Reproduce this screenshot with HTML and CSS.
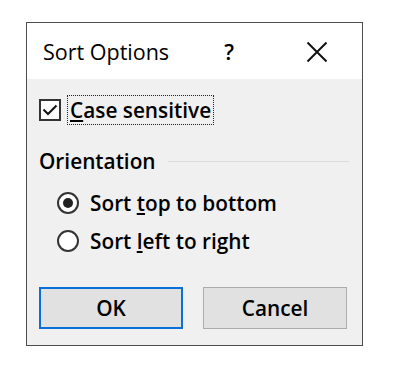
FILE: index.html
```html
<!DOCTYPE html>
<html lang="en">
<head>
    <meta charset="UTF-8">
    <title>Sort Options</title>
    <link rel="stylesheet" href="styles.css">
</head>
<body>
<div class="dialog">
    <div class="title-bar">
        <span class="title">Sort Options</span>
        <span class="help">?</span>
        <span class="close">
            <svg width="22" height="22" viewBox="0 0 22 22">
                <path d="M1.5 1.5 L20.5 20.5 M20.5 1.5 L1.5 20.5" stroke="#111" stroke-width="2" fill="none"/>
            </svg>
        </span>
    </div>
    <div class="content">
        <label class="check-row">
            <span class="checkbox">
                <svg width="18" height="18" viewBox="0 0 18 18">
                    <polyline points="2.5,8.5 7,13 15.5,4.5" stroke="#111" stroke-width="2" fill="none"/>
                </svg>
            </span>
            <span class="focus"><u>C</u>ase sensitive</span>
        </label>

        <div class="group-title">
            <span>Orientation</span>
            <span class="line"></span>
        </div>

        <label class="radio-row first">
            <span class="radio checked"></span>
            <span>Sort <u>t</u>op to bottom</span>
        </label>
        <label class="radio-row">
            <span class="radio"></span>
            <span>Sort <u>l</u>eft to right</span>
        </label>

        <div class="buttons">
            <button class="btn default">OK</button>
            <button class="btn">Cancel</button>
        </div>
    </div>
</div>
</body>
</html>
```

FILE: styles.css
```css
body {
    margin: 0;
    background-color: white;
    font-family: 'Open Sans', sans-serif;
    font-size: 21.5px;
    color: black;
}
.dialog {
    width: 335px;
    margin-left: 26px;
    margin-top: 22px;
    border: 1px solid #4d4d4d;
    background-color: #f0f0f0;
}
.title-bar {
    display: flex;
    align-items: center;
    background-color: white;
    padding: 14px 34px 12px 16px;
    height: 30px;
}
.title {
    line-height: 30px;
}
.help {
    margin-left: auto;
    line-height: 30px;
    font-weight: 600;
}
.close {
    display: flex;
    margin-left: 72px;
}
.content {
    padding: 16px 13px 16px 12px;
    font-size: 20.8px;
    font-weight: 600;
}
.check-row {
    display: flex;
    align-items: center;
    height: 30px;
}
.checkbox {
    width: 18px;
    height: 18px;
    border: 2px solid #333;
    background-color: white;
    display: flex;
}
.focus {
    margin-left: 6px;
    border: 1px dotted #222;
    padding: 0 2px;
    line-height: 28px;
}
.group-title {
    display: flex;
    align-items: center;
    margin-top: 21px;
    line-height: 30px;
}
.group-title .line {
    flex: 1;
    height: 1px;
    background-color: #dcdcdc;
    margin-left: 12px;
}
.radio-row {
    display: flex;
    align-items: center;
    height: 30px;
    margin-top: 8px;
    padding-left: 18px;
}
.radio-row.first {
    margin-top: 12px;
}
.radio {
    width: 18px;
    height: 18px;
    border: 2px solid #333;
    border-radius: 50%;
    background-color: white;
    margin-right: 11px;
    display: flex;
    align-items: center;
    justify-content: center;
}
.radio.checked::after {
    content: "";
    width: 10px;
    height: 10px;
    border-radius: 50%;
    background-color: #222;
}
.buttons {
    display: flex;
    gap: 20px;
    margin-top: 31px;
}
.btn {
    width: 144px;
    height: 42px;
    font-family: 'Open Sans', sans-serif;
    font-size: 20.8px;
    font-weight: 600;
    color: black;
    background-color: #e1e1e1;
    border: 1px solid #adadad;
    padding: 0;
}
.btn.default {
    border: 2px solid #0a6fd8;
}
```
